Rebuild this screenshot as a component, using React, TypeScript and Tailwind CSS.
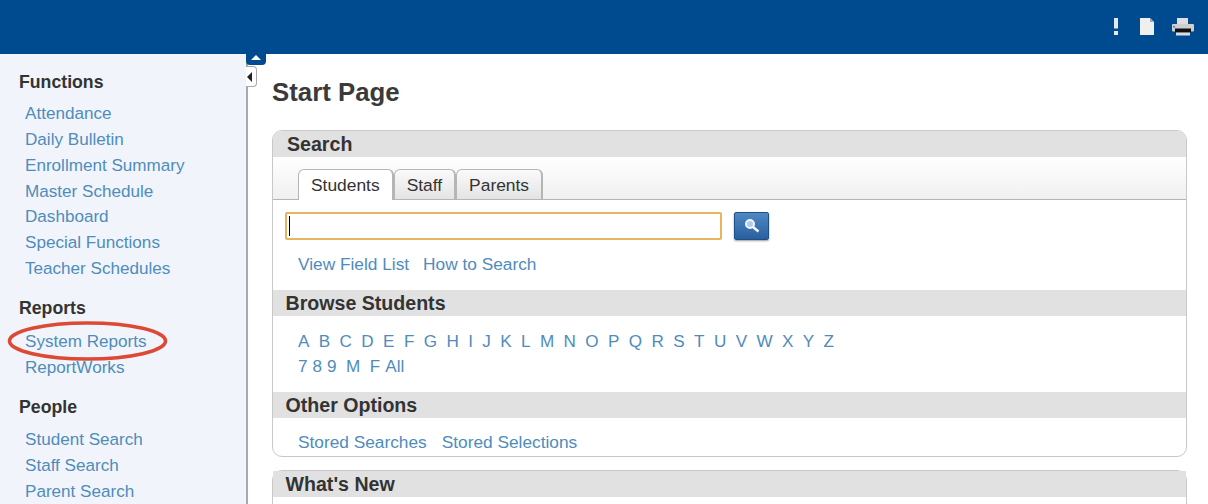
import React from "react";

const sections = [
  { title: "Functions", cls: "mb-[13.3px]", ulCls: "mt-[6.5px]", items: ["Attendance", "Daily Bulletin", "Enrollment Summary", "Master Schedule", "Dashboard", "Special Functions", "Teacher Schedules"] },
  { title: "Reports", cls: "mb-[13.5px]", ulCls: "mt-[7.8px]", items: ["System Reports", "ReportWorks"] },
  { title: "People", cls: "mb-0", ulCls: "mt-[7px]", items: ["Student Search", "Staff Search", "Parent Search"] },
];
const row1 = "A B C D E F G H I J K L M N O P Q R S T U V W X Y Z".split(" ");
const row2 = ["7", "8", "9", "M", "F", "All"];

function Section({ title, items, cls, ulCls }: { title: string; items: string[]; cls: string; ulCls: string }) {
  return (
    <div className={cls}>
      <h3 className="h-[26px] pl-[19px] text-[17.7px] leading-[26px] font-bold text-[#333333]">{title}</h3>
      <ul className={ulCls}>
        {items.map((i) => (
          <li key={i} className="h-[25.85px] pl-[25px] text-[17.1px] leading-[26px] text-[#4f8cbc]">{i}</li>
        ))}
      </ul>
    </div>
  );
}

function Bar({ children, pad = "pl-[12.5px]" }: { children: string; pad?: string }) {
  return <div className={`h-[26px] bg-[#e1e1e1] ${pad} text-[19.6px] leading-[26px] font-bold text-[#333333]`}>{children}</div>;
}

function Tab({ label, active }: { label: string; active?: boolean }) {
  return (
    <div
      className={
        active
          ? "relative z-10 -mb-px h-[31px] rounded-t-[6px] border border-b-0 border-r-2 border-[#b5b5b5] bg-white px-[12px] text-[17.4px] leading-[31px] text-[#333333]"
          : "h-[30px] rounded-t-[6px] border border-r-2 border-b-0 border-[#b5b5b5] bg-gradient-to-b from-[#fafafa] to-[#e4e4e4] px-[12px] text-[17.4px] leading-[31px] text-[#333333]"
      }
    >
      {label}
    </div>
  );
}

export default function App() {
  return (
    <div className="relative flex h-[504px] w-[1208px] flex-col overflow-hidden bg-white font-['Liberation_Sans',Arial,sans-serif]">
      <header className="flex h-[54px] shrink-0 items-center justify-end bg-[#004a90]">
        <span className="mr-[21px] flex items-center">
          <svg width="6" height="18" viewBox="0 0 6 18"><rect x="1" y="0" width="4" height="10.5" fill="#e8e8e8" /><rect x="1" y="13" width="4" height="4" fill="#e8e8e8" /></svg>
        </span>
        <span className="mr-[18px] flex items-center">
          <svg width="14" height="18" viewBox="0 0 14 18"><path d="M0 0H10L14 4V17H0Z" fill="#efefef" /><path d="M10 0V4H14Z" fill="#9aa7b5" /></svg>
        </span>
        <span className="mr-[14px] flex items-center">
          <svg width="22" height="18" viewBox="0 0 22 18">
            <rect x="5" y="0" width="11" height="7" fill="#dedede" />
            <rect x="0" y="6" width="22" height="7.5" rx="1" fill="#cfcfcf" />
            <rect x="1" y="8" width="2" height="1.5" fill="#4a7be0" />
            <rect x="3" y="10.5" width="16" height="4" fill="#111111" />
            <rect x="4" y="14.5" width="14" height="3" fill="#dddddd" />
          </svg>
        </span>
      </header>
      <div className="flex min-h-0 flex-1">
        <aside className="relative h-full w-[248px] shrink-0 border-r-2 border-[#a9a9a9] bg-[#f1f5fb] pt-[14.5px]">
          {sections.map((s) => <Section key={s.title} {...s} />)}
          <svg className="absolute left-[7px] top-[267px]" width="161" height="40" viewBox="0 0 161 40">
            <ellipse cx="80.5" cy="20" rx="78" ry="18" fill="none" stroke="#dc4a35" strokeWidth="3.6" />
          </svg>
          <div className="absolute -right-[20px] top-0 h-[11px] w-[20px] rounded-b-[4px] bg-[#004a90]">
            <div className="mx-auto mt-[1px] h-0 w-0 border-x-[5px] border-b-[5px] border-x-transparent border-b-white" />
          </div>
          <div className="absolute -right-[11px] top-[12px] flex h-[21px] w-[11px] items-center rounded-r-[4px] border border-l-0 border-[#a9a9a9] bg-white">
            <div className="ml-[1px] h-0 w-0 border-y-[5px] border-r-[5px] border-y-transparent border-r-[#222222]" />
          </div>
        </aside>
        <main className="min-w-0 flex-1 pl-[24px] pr-[21px]">
          <h1 className="mt-[22px] h-[32px] text-[25.8px] leading-[32px] font-bold text-[#3a3a3a]">Start Page</h1>
          <section className="mt-[22px] h-[327px] overflow-hidden rounded-[10px] border border-[#c8c8c8]">
            <Bar pad="pl-[14px]">Search</Bar>
            <div className="flex h-[43px] items-end border-b border-[#b5b5b5] bg-gradient-to-b from-white to-[#f0f0f0] pl-[25px]">
              <Tab label="Students" active />
              <Tab label="Staff" />
              <Tab label="Parents" />
            </div>
            <div className="flex items-center pl-[12px] pt-[12px]">
              <div className="flex h-[28px] w-[437px] items-center rounded-[2px] border-2 border-[#e5b55f] bg-white pl-[2px]">
                <div className="h-[20px] w-px bg-black" />
              </div>
              <div className="ml-[12px] flex h-[28px] w-[35px] items-center justify-center rounded-[2px] border border-[#1d4f88] bg-gradient-to-b from-[#4f88c4] to-[#2a5f9e] shadow-[0_1px_2px_rgba(0,0,0,0.4)]">
                <svg width="16" height="16" viewBox="0 0 16 16"><circle cx="6" cy="6" r="4" fill="#a9cdf0" stroke="#f2f6fa" strokeWidth="2" /><path d="M9 9L14.5 13.5" stroke="#f2f6fa" strokeWidth="2.6" /></svg>
              </div>
            </div>
            <div className="mt-[11px] flex h-[26px] gap-[14px] pl-[25px] text-[17.3px] leading-[26px] text-[#4f8cbc]">
              <span>View Field List</span><span>How to Search</span>
            </div>
            <div className="mt-[13px]"><Bar>Browse Students</Bar></div>
            <div className="mt-[13px] flex h-[25px] gap-[9.4px] pl-[25px] text-[17.1px] leading-[25px] text-[#4f8cbc]">
              {row1.map((c) => <span key={c}>{c}</span>)}
            </div>
            <div className="flex h-[26px] gap-[5px] pl-[25px] text-[17.1px] leading-[26px] text-[#4f8cbc]">
              {row2.map((c) => <span key={c} className={c === "M" ? "mx-[4.5px]" : ""}>{c}</span>)}
            </div>
            <div className="mt-[12px]"><Bar>Other Options</Bar></div>
            <div className="mt-[11px] flex h-[26px] gap-[15px] pl-[25px] text-[17.3px] leading-[26px] text-[#4f8cbc]">
              <span>Stored Searches</span><span>Stored Selections</span>
            </div>
          </section>
          <section className="mt-[13px] h-[60px] rounded-t-[10px] border-x border-t border-[#c8c8c8]">
            <Bar>What's New</Bar>
          </section>
        </main>
      </div>
    </div>
  );
}
